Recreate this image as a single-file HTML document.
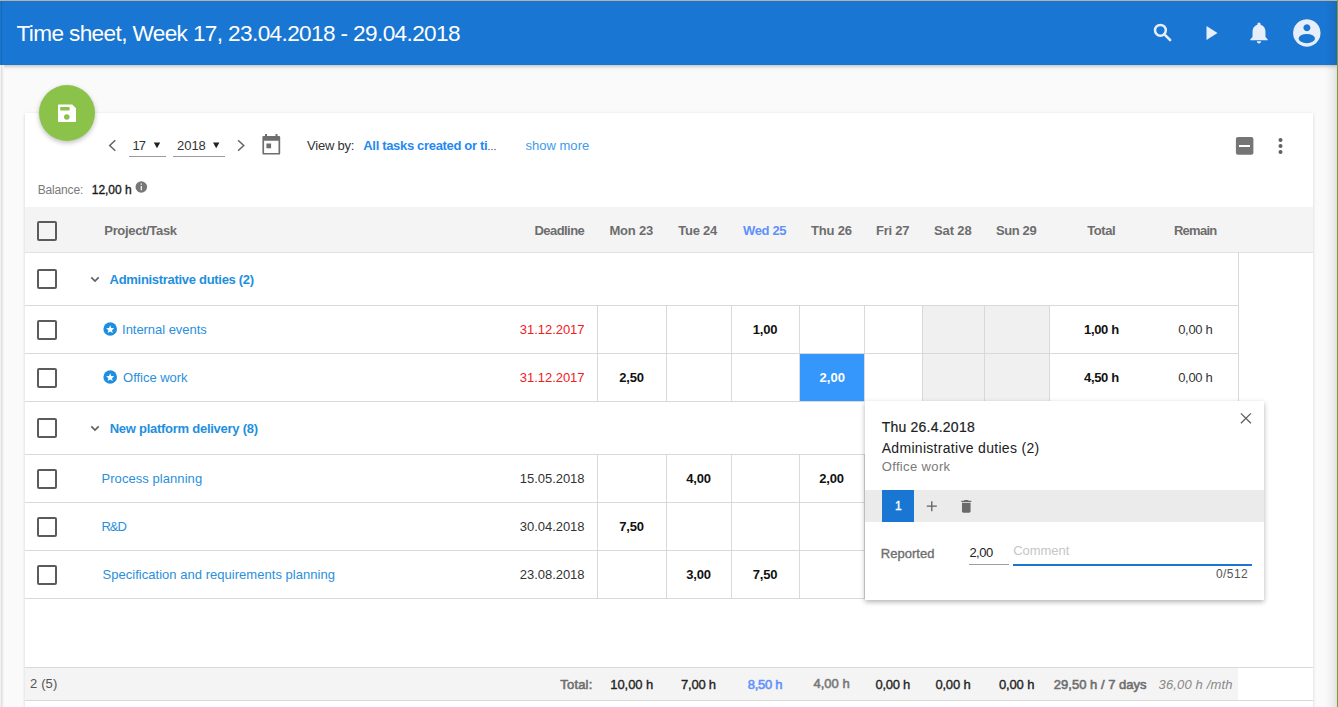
<!DOCTYPE html>
<html><head><meta charset="utf-8">
<style>
*{box-sizing:border-box;margin:0;padding:0}
html,body{width:1338px;height:707px;overflow:hidden;background:#fafafa;font-family:"Liberation Sans",sans-serif;color:#212121}
body{position:relative}
.a{position:absolute;white-space:nowrap}
.t{font-family:"Liberation Sans",sans-serif}
.hl{position:absolute;height:1px;background:#d9d9d9}
.vl{position:absolute;width:1px;background:#d9d9d9}
.cb{position:absolute;width:20px;height:20px;border:2px solid #5b5b5b;border-radius:2px;left:37px}
</style></head><body>
<div class="a" style="left:0;top:0;width:1338px;height:1px;background:#c8bcb0"></div>
<div class="a" style="left:0;top:1px;width:1337px;height:64px;background:#1976d2;box-shadow:0 1px 4px rgba(0,0,0,.28)"></div>
<div class="a" style="left:1px;top:1px;width:1px;height:64px;background:rgba(0,0,0,.12)"></div>
<div class="a" style="left:0;top:65px;width:1px;height:642px;background:#f2f2f2"></div><div class="a" style="left:1px;top:65px;width:1px;height:642px;background:#e0e0e0"></div><div class="a" style="left:2px;top:65px;width:1px;height:642px;background:#ebebeb"></div><div class="a" style="left:3px;top:65px;width:1px;height:642px;background:#f4f4f4"></div>
<!-- card -->
<div class="a" style="left:25px;top:113px;width:1288px;height:620px;background:#fff;box-shadow:0 1px 3px rgba(0,0,0,.16)"></div>
<!-- table header band -->
<div class="a" style="left:25px;top:207px;width:1288px;height:45px;background:#f4f4f4"></div>
<div class="hl" style="left:25px;top:252px;width:1288px;background:#e2e2e2"></div>
<!-- weekend cells -->
<div class="a" style="left:922px;top:305px;width:127px;height:96px;background:#f0f0f0"></div>
<div class="a" style="left:922px;top:454px;width:127px;height:144px;background:#f0f0f0"></div>
<!-- highlighted cell -->
<div class="a" style="left:799px;top:353px;width:66px;height:48px;background:#3597fc"></div>
<!-- row lines -->
<div class="hl" style="left:25px;top:305px;width:1213px"></div>
<div class="hl" style="left:25px;top:353px;width:1213px"></div>
<div class="hl" style="left:25px;top:401px;width:1213px"></div>
<div class="hl" style="left:25px;top:454px;width:1213px"></div>
<div class="hl" style="left:25px;top:502px;width:1213px"></div>
<div class="hl" style="left:25px;top:550px;width:1213px"></div>
<div class="hl" style="left:25px;top:598px;width:1213px"></div>
<!-- col lines -->
<div class="vl" style="left:597px;top:305px;height:96px"></div>
<div class="vl" style="left:666px;top:305px;height:96px"></div>
<div class="vl" style="left:731px;top:305px;height:96px"></div>
<div class="vl" style="left:799px;top:305px;height:96px"></div>
<div class="vl" style="left:864px;top:305px;height:96px"></div>
<div class="vl" style="left:922px;top:305px;height:96px"></div>
<div class="vl" style="left:984px;top:305px;height:96px"></div>
<div class="vl" style="left:1049px;top:305px;height:96px"></div>
<div class="vl" style="left:597px;top:454px;height:144px"></div>
<div class="vl" style="left:666px;top:454px;height:144px"></div>
<div class="vl" style="left:731px;top:454px;height:144px"></div>
<div class="vl" style="left:799px;top:454px;height:144px"></div>
<div class="vl" style="left:864px;top:454px;height:144px"></div>
<div class="vl" style="left:922px;top:454px;height:144px"></div>
<div class="vl" style="left:984px;top:454px;height:144px"></div>
<div class="vl" style="left:1049px;top:454px;height:144px"></div>
<div class="vl" style="left:1238px;top:252px;height:346px"></div>
<!-- footer -->
<div class="a" style="left:25px;top:667px;width:1213px;height:33px;background:#f4f4f4"></div>
<div class="hl" style="left:25px;top:667px;width:1288px"></div>
<div class="hl" style="left:25px;top:700px;width:1288px"></div>
<!-- checkboxes -->
<div class="cb" style="top:221px"></div>
<div class="cb" style="top:269px"></div>
<div class="cb" style="top:320px"></div>
<div class="cb" style="top:368px"></div>
<div class="cb" style="top:418px"></div>
<div class="cb" style="top:469px"></div>
<div class="cb" style="top:517px"></div>
<div class="cb" style="top:565px"></div>
<!-- toolbar underlines -->
<div class="a" style="left:129px;top:156px;width:37px;height:1px;background:#9a9a9a"></div>
<div class="a" style="left:173px;top:156px;width:52px;height:1px;background:#9a9a9a"></div>
<!-- FAB -->
<div class="a" style="left:39px;top:85px;width:56px;height:56px;border-radius:50%;background:#8bc34a;box-shadow:0 2px 5px rgba(0,0,0,.26)"></div>
<!-- popup -->
<div class="a" style="left:865px;top:401px;width:399px;height:199px;background:#fff;box-shadow:0 2px 5px rgba(0,0,0,.3)"></div>
<div class="a" style="left:865px;top:490px;width:399px;height:32px;background:#ebebeb"></div>
<div class="a" style="left:882px;top:490px;width:32px;height:32px;background:#1976d2"></div>
<div class="a" style="left:969px;top:564px;width:40px;height:1px;background:#9e9e9e"></div>
<div class="a" style="left:1013px;top:564px;width:239px;height:2px;background:#1976d2"></div>
<div class="a t" style="left:16.50px;top:22.67px;font-size:22.6px;line-height:22.6px;font-weight:400;font-style:normal;color:#ffffff;letter-spacing:-0.627px;">Time sheet, Week 17, 23.04.2018 - 29.04.2018</div>
<div class="a t" style="left:132.40px;top:139.00px;font-size:13px;line-height:13px;font-weight:400;font-style:normal;color:#333333;letter-spacing:-0.830px;">17</div>
<div class="a t" style="left:177.00px;top:139.00px;font-size:13px;line-height:13px;font-weight:400;font-style:normal;color:#333333;letter-spacing:-0.030px;">2018</div>
<div class="a t" style="left:307.00px;top:139.00px;font-size:13px;line-height:13px;font-weight:400;font-style:normal;color:#333333;letter-spacing:-0.212px;">View by:</div>
<div class="a t" style="left:363.30px;top:139.00px;font-size:13px;line-height:13px;font-weight:700;font-style:normal;color:#1f8af2;letter-spacing:-0.327px;">All tasks created or ti</div>
<div class="a t" style="left:525.40px;top:139.00px;font-size:13px;line-height:13px;font-weight:400;font-style:normal;color:#3d9be9;letter-spacing:0.031px;">show more</div>
<div class="a t" style="left:37.70px;top:183.84px;font-size:12px;line-height:12px;font-weight:400;font-style:normal;color:#7a7a7a;letter-spacing:-0.166px;">Balance:</div>
<div class="a t" style="left:91.80px;top:183.84px;font-size:12px;line-height:12px;font-weight:400;font-style:normal;color:#1a1a1a;letter-spacing:-0.044px;-webkit-text-stroke:0.35px currentColor;">12,00 h</div>
<div class="a t" style="left:104.30px;top:224.00px;font-size:13px;line-height:13px;font-weight:700;font-style:normal;color:#6d6d6d;letter-spacing:-0.329px;">Project/Task</div>
<div class="a t" style="left:534.40px;top:224.00px;font-size:13px;line-height:13px;font-weight:700;font-style:normal;color:#6d6d6d;letter-spacing:-0.536px;">Deadline</div>
<div class="a t" style="left:609.50px;top:224.00px;font-size:13px;line-height:13px;font-weight:700;font-style:normal;color:#6d6d6d;letter-spacing:-0.231px;">Mon 23</div>
<div class="a t" style="left:678.30px;top:224.00px;font-size:13px;line-height:13px;font-weight:700;font-style:normal;color:#6d6d6d;letter-spacing:-0.258px;">Tue 24</div>
<div class="a t" style="left:743.10px;top:224.00px;font-size:13px;line-height:13px;font-weight:700;font-style:normal;color:#6190fc;letter-spacing:-0.370px;">Wed 25</div>
<div class="a t" style="left:811.10px;top:224.00px;font-size:13px;line-height:13px;font-weight:700;font-style:normal;color:#6d6d6d;letter-spacing:-0.213px;">Thu 26</div>
<div class="a t" style="left:876.00px;top:224.00px;font-size:13px;line-height:13px;font-weight:700;font-style:normal;color:#6d6d6d;letter-spacing:-0.251px;">Fri 27</div>
<div class="a t" style="left:934.10px;top:224.00px;font-size:13px;line-height:13px;font-weight:700;font-style:normal;color:#6d6d6d;letter-spacing:-0.154px;">Sat 28</div>
<div class="a t" style="left:996.00px;top:224.00px;font-size:13px;line-height:13px;font-weight:700;font-style:normal;color:#6d6d6d;letter-spacing:-0.399px;">Sun 29</div>
<div class="a t" style="left:1087.30px;top:224.00px;font-size:13px;line-height:13px;font-weight:700;font-style:normal;color:#6d6d6d;letter-spacing:-0.444px;">Total</div>
<div class="a t" style="left:1173.90px;top:224.00px;font-size:13px;line-height:13px;font-weight:700;font-style:normal;color:#6d6d6d;letter-spacing:-0.724px;">Remain</div>
<div class="a t" style="left:109.60px;top:272.80px;font-size:13px;line-height:13px;font-weight:700;font-style:normal;color:#1e8fe0;letter-spacing:-0.299px;">Administrative duties (2)</div>
<div class="a t" style="left:109.70px;top:421.80px;font-size:13px;line-height:13px;font-weight:700;font-style:normal;color:#1e8fe0;letter-spacing:-0.261px;">New platform delivery (8)</div>
<div class="a t" style="left:122.10px;top:322.90px;font-size:13px;line-height:13px;font-weight:400;font-style:normal;color:#2a8fdc;letter-spacing:-0.048px;">Internal events</div>
<div class="a t" style="left:519.80px;top:323.10px;font-size:13px;line-height:13px;font-weight:400;font-style:normal;color:#f0201e;letter-spacing:-0.037px;">31.12.2017</div>
<div class="a t" style="left:752.75px;top:322.90px;font-size:13px;line-height:13px;font-weight:700;font-style:normal;color:#111111;letter-spacing:-0.191px;">1,00</div>
<div class="a t" style="left:1084.00px;top:323.00px;font-size:13px;line-height:13px;font-weight:700;font-style:normal;color:#111111;letter-spacing:-0.323px;">1,00 h</div>
<div class="a t" style="left:1178.20px;top:323.00px;font-size:13px;line-height:13px;font-weight:400;font-style:normal;color:#333333;letter-spacing:-0.303px;">0,00 h</div>
<div class="a t" style="left:123.10px;top:370.80px;font-size:13px;line-height:13px;font-weight:400;font-style:normal;color:#2a8fdc;letter-spacing:-0.038px;">Office work</div>
<div class="a t" style="left:519.80px;top:371.00px;font-size:13px;line-height:13px;font-weight:400;font-style:normal;color:#f0201e;letter-spacing:-0.037px;">31.12.2017</div>
<div class="a t" style="left:619.25px;top:371.00px;font-size:13px;line-height:13px;font-weight:700;font-style:normal;color:#111111;letter-spacing:-0.191px;">2,50</div>
<div class="a t" style="left:819.50px;top:370.80px;font-size:13px;line-height:13px;font-weight:700;font-style:normal;color:#ffffff;letter-spacing:0.043px;">2,00</div>
<div class="a t" style="left:1084.00px;top:371.00px;font-size:13px;line-height:13px;font-weight:700;font-style:normal;color:#111111;letter-spacing:-0.323px;">4,50 h</div>
<div class="a t" style="left:1178.20px;top:371.00px;font-size:13px;line-height:13px;font-weight:400;font-style:normal;color:#333333;letter-spacing:-0.303px;">0,00 h</div>
<div class="a t" style="left:101.50px;top:472.00px;font-size:13px;line-height:13px;font-weight:400;font-style:normal;color:#2a8fdc;letter-spacing:0.060px;">Process planning</div>
<div class="a t" style="left:519.80px;top:472.00px;font-size:13px;line-height:13px;font-weight:400;font-style:normal;color:#333333;letter-spacing:-0.037px;">15.05.2018</div>
<div class="a t" style="left:686.25px;top:472.00px;font-size:13px;line-height:13px;font-weight:700;font-style:normal;color:#111111;letter-spacing:-0.191px;">4,00</div>
<div class="a t" style="left:819.25px;top:472.00px;font-size:13px;line-height:13px;font-weight:700;font-style:normal;color:#111111;letter-spacing:-0.191px;">2,00</div>
<div class="a t" style="left:101.50px;top:520.00px;font-size:13px;line-height:13px;font-weight:400;font-style:normal;color:#2a8fdc;letter-spacing:-1.080px;">R&amp;D</div>
<div class="a t" style="left:519.80px;top:520.00px;font-size:13px;line-height:13px;font-weight:400;font-style:normal;color:#333333;letter-spacing:-0.037px;">30.04.2018</div>
<div class="a t" style="left:619.25px;top:520.00px;font-size:13px;line-height:13px;font-weight:700;font-style:normal;color:#111111;letter-spacing:-0.191px;">7,50</div>
<div class="a t" style="left:102.50px;top:567.80px;font-size:13px;line-height:13px;font-weight:400;font-style:normal;color:#2a8fdc;letter-spacing:0.031px;">Specification and requirements planning</div>
<div class="a t" style="left:519.80px;top:567.80px;font-size:13px;line-height:13px;font-weight:400;font-style:normal;color:#333333;letter-spacing:-0.037px;">23.08.2018</div>
<div class="a t" style="left:686.25px;top:567.80px;font-size:13px;line-height:13px;font-weight:700;font-style:normal;color:#111111;letter-spacing:-0.191px;">3,00</div>
<div class="a t" style="left:752.75px;top:567.80px;font-size:13px;line-height:13px;font-weight:700;font-style:normal;color:#111111;letter-spacing:-0.191px;">7,50</div>
<div class="a t" style="left:30.00px;top:676.70px;font-size:13px;line-height:13px;font-weight:400;font-style:normal;color:#555555;letter-spacing:0.150px;">2 (5)</div>
<div class="a t" style="left:560.30px;top:678.40px;font-size:13px;line-height:13px;font-weight:400;font-style:normal;color:#6d6d6d;letter-spacing:0.188px;-webkit-text-stroke:0.55px currentColor;">Total:</div>
<div class="a t" style="left:610.30px;top:678.40px;font-size:13px;line-height:13px;font-weight:400;font-style:normal;color:#222222;letter-spacing:-0.074px;-webkit-text-stroke:0.35px currentColor;">10,00 h</div>
<div class="a t" style="left:681.00px;top:678.40px;font-size:13px;line-height:13px;font-weight:400;font-style:normal;color:#222222;letter-spacing:-0.223px;-webkit-text-stroke:0.35px currentColor;">7,00 h</div>
<div class="a t" style="left:747.80px;top:678.40px;font-size:13px;line-height:13px;font-weight:400;font-style:normal;color:#6190fc;letter-spacing:-0.303px;-webkit-text-stroke:0.55px currentColor;">8,50 h</div>
<div class="a t" style="left:813.50px;top:677.00px;font-size:13px;line-height:13px;font-weight:400;font-style:normal;color:#777777;letter-spacing:-0.003px;-webkit-text-stroke:0.55px currentColor;">4,00 h</div>
<div class="a t" style="left:875.40px;top:678.40px;font-size:13px;line-height:13px;font-weight:400;font-style:normal;color:#222222;letter-spacing:-0.243px;-webkit-text-stroke:0.35px currentColor;">0,00 h</div>
<div class="a t" style="left:935.40px;top:678.40px;font-size:13px;line-height:13px;font-weight:400;font-style:normal;color:#222222;letter-spacing:-0.183px;-webkit-text-stroke:0.35px currentColor;">0,00 h</div>
<div class="a t" style="left:998.90px;top:678.40px;font-size:13px;line-height:13px;font-weight:400;font-style:normal;color:#222222;letter-spacing:-0.123px;-webkit-text-stroke:0.35px currentColor;">0,00 h</div>
<div class="a t" style="left:1053.80px;top:678.40px;font-size:13px;line-height:13px;font-weight:400;font-style:normal;color:#6d6d6d;letter-spacing:0.019px;-webkit-text-stroke:0.55px currentColor;">29,50 h / 7 days</div>
<div class="a t" style="left:1158.60px;top:678.40px;font-size:13px;line-height:13px;font-weight:400;font-style:italic;color:#888888;letter-spacing:0.142px;">36,00 h /mth</div>
<div class="a t" style="left:881.70px;top:419.95px;font-size:14px;line-height:14px;font-weight:400;font-style:normal;color:#212121;letter-spacing:0.224px;-webkit-text-stroke:0.2px currentColor;">Thu 26.4.2018</div>
<div class="a t" style="left:881.70px;top:441.05px;font-size:14px;line-height:14px;font-weight:400;font-style:normal;color:#212121;letter-spacing:0.304px;">Administrative duties (2)</div>
<div class="a t" style="left:881.70px;top:459.70px;font-size:13px;line-height:13px;font-weight:400;font-style:normal;color:#7a7a7a;letter-spacing:0.362px;">Office work</div>
<div class="a t" style="left:895.00px;top:499.84px;font-size:12px;line-height:12px;font-weight:400;font-style:normal;color:#ffffff;letter-spacing:0.000px;-webkit-text-stroke:0.35px currentColor;">1</div>
<div class="a t" style="left:880.70px;top:546.70px;font-size:13px;line-height:13px;font-weight:400;font-style:normal;color:#6e6e6e;letter-spacing:0.050px;-webkit-text-stroke:0.35px currentColor;">Reported</div>
<div class="a t" style="left:969.40px;top:546.00px;font-size:13px;line-height:13px;font-weight:400;font-style:normal;color:#222222;letter-spacing:-0.524px;">2,00</div>
<div class="a t" style="left:1013.20px;top:543.70px;font-size:13px;line-height:13px;font-weight:400;font-style:normal;color:#c6c6c6;letter-spacing:-0.039px;">Comment</div>
<div class="a t" style="left:1216.00px;top:568.34px;font-size:12px;line-height:12px;font-weight:400;font-style:normal;color:#555555;letter-spacing:0.411px;">0/512</div>
<svg class="a" style="left:0;top:0" width="1338" height="707" viewBox="0 0 1338 707">
 <!-- header icons -->
 <g fill="#e6eef9">
  <circle cx="1160.4" cy="30.3" r="5.4" fill="none" stroke="#e6eef9" stroke-width="2.5"/><path d="M1164.4,34.3L1170.1,40" stroke="#e6eef9" stroke-width="2.6" stroke-linecap="round"/>
  <path transform="translate(1198.5,21)" d="M8 5v14l11-7z"/>
  <path transform="translate(1246.04,19.77) scale(1.08)" d="M12 22c1.1 0 2-.9 2-2h-4c0 1.1.89 2 2 2zm6-6v-5c0-3.07-1.64-5.64-4.5-6.32V4c0-.83-.67-1.5-1.5-1.5s-1.5.67-1.5 1.5v.68C7.63 5.36 6 7.92 6 11v5l-2 2v1h16v-1l-2-2z"/>
  <path fill-rule="evenodd" d="M1306.8,19.2a13.75,13.75 0 1,0 0.01,0Z M1306.9,24.3a3.5,3.5 0 1,0 0.01,0Z M1298.6,38.6a8.2,4.6 0 1,0 16.4,0a8.2,4.6 0 1,0 -16.4,0Z"/>
 </g>
 <!-- save icon -->
 <path fill="#fff" fill-rule="evenodd" d="M59,104.5H72.2L76,108.3V121A1,1 0 0 1 75,122H59A1,1 0 0 1 58,121V105.5A1,1 0 0 1 59,104.5Z M60.2,107V110.4H69.6V107Z M64,117a2.8,2.8 0 1,0 5.6,0a2.8,2.8 0 1,0 -5.6,0Z"/>
 <!-- chevrons -->
 <g fill="none" stroke="#666" stroke-width="1.55">
  <path d="M115.3,140.2L109.7,145.5L115.3,150.8"/>
  <path d="M238.1,140.2L243.7,145.5L238.1,150.8"/>
 </g>
 <!-- select arrows -->
 <path fill="#222" d="M153.8,142.5H160.2L157,148.3Z M213,142.5H219.4L216.2,148.3Z"/>
 <!-- calendar -->
 <path fill="#6e6e6e" fill-rule="evenodd" d="M263.6,135.9H279A1.2,1.2 0 0 1 280.2,137.1V153.4A1.2,1.2 0 0 1 279,154.6H263.6A1.2,1.2 0 0 1 262.4,153.4V137.1A1.2,1.2 0 0 1 263.6,135.9Z M264.1,140.8V153H278.5V140.8Z"/>
 <path fill="#6e6e6e" d="M266.4,143.4H271.1V148.2H266.4Z M265,134H267V136.5H265Z M275.5,134H277.5V136.5H275.5Z"/>
 <!-- ellipsis -->
 <g fill="#555"><circle cx="489" cy="149.5" r="0.7"/><circle cx="492" cy="149.5" r="0.7"/><circle cx="495" cy="149.5" r="0.7"/></g>
 <!-- minus box, kebab -->
 <rect x="1235.9" y="137" width="17.5" height="17.8" rx="2" fill="#757575"/>
 <rect x="1239" y="145" width="11" height="2" fill="#fff"/>
 <g fill="#616161"><circle cx="1280.5" cy="140" r="2"/><circle cx="1280.5" cy="146" r="2"/><circle cx="1280.5" cy="152" r="2"/></g>
 <!-- info -->
 <circle cx="141.3" cy="187" r="5.8" fill="#777"/>
 <path fill="#fff" d="M140.7,186H141.9V190.3H140.7Z M140.7,183.6H141.9V184.8H140.7Z"/>
 <!-- group chevrons -->
 <g fill="none" stroke="#616161" stroke-width="1.7">
  <path d="M91.3,277.4L95,281.1L98.7,277.4"/>
  <path d="M91.3,426.4L95,430.1L98.7,426.4"/>
 </g>
 <!-- stars -->
 <g>
  <circle cx="110.2" cy="329" r="6.8" fill="#1e8fe0"/>
  <circle cx="110.2" cy="377" r="6.8" fill="#1e8fe0"/>
  <path fill="#fff" d="M110.20,325.30L111.32,328.06L114.29,328.27L112.01,330.19L112.73,333.08L110.20,331.50L107.67,333.08L108.39,330.19L106.11,328.27L109.08,328.06Z M110.20,373.30L111.32,376.06L114.29,376.27L112.01,378.19L112.73,381.08L110.20,379.50L107.67,381.08L108.39,378.19L106.11,376.27L109.08,376.06Z"/>
 </g>
 <!-- popup icons -->
 <g stroke="#5c5c5c" stroke-width="1.25" fill="none">
  <path d="M1240.9,413.4L1250.9,423.2M1250.9,413.4L1240.9,423.2"/>
 </g>
 <g stroke="#616161" stroke-width="1.3" fill="none">
  <path d="M926.8,506.2H936.8M931.8,501.2V511.2"/>
 </g>
 <path fill="#6a6a6a" transform="translate(957.7,497.8) scale(0.714)" d="M6 19c0 1.1.9 2 2 2h8c1.1 0 2-.9 2-2V7H6v12zM19 4h-3.5l-1-1h-5l-1 1H5v2h14V4z"/>
</svg>
<div class="a" style="left:1325px;top:1px;width:12px;height:706px;background:linear-gradient(to right,rgba(0,0,0,0) 0%,rgba(0,0,0,.03) 45%,rgba(0,0,0,.075) 85%,rgba(30,30,60,.14) 100%)"></div>
<div class="a" style="left:1337px;top:0;width:1px;height:707px;background:#7a9e34"></div>
</body></html>
